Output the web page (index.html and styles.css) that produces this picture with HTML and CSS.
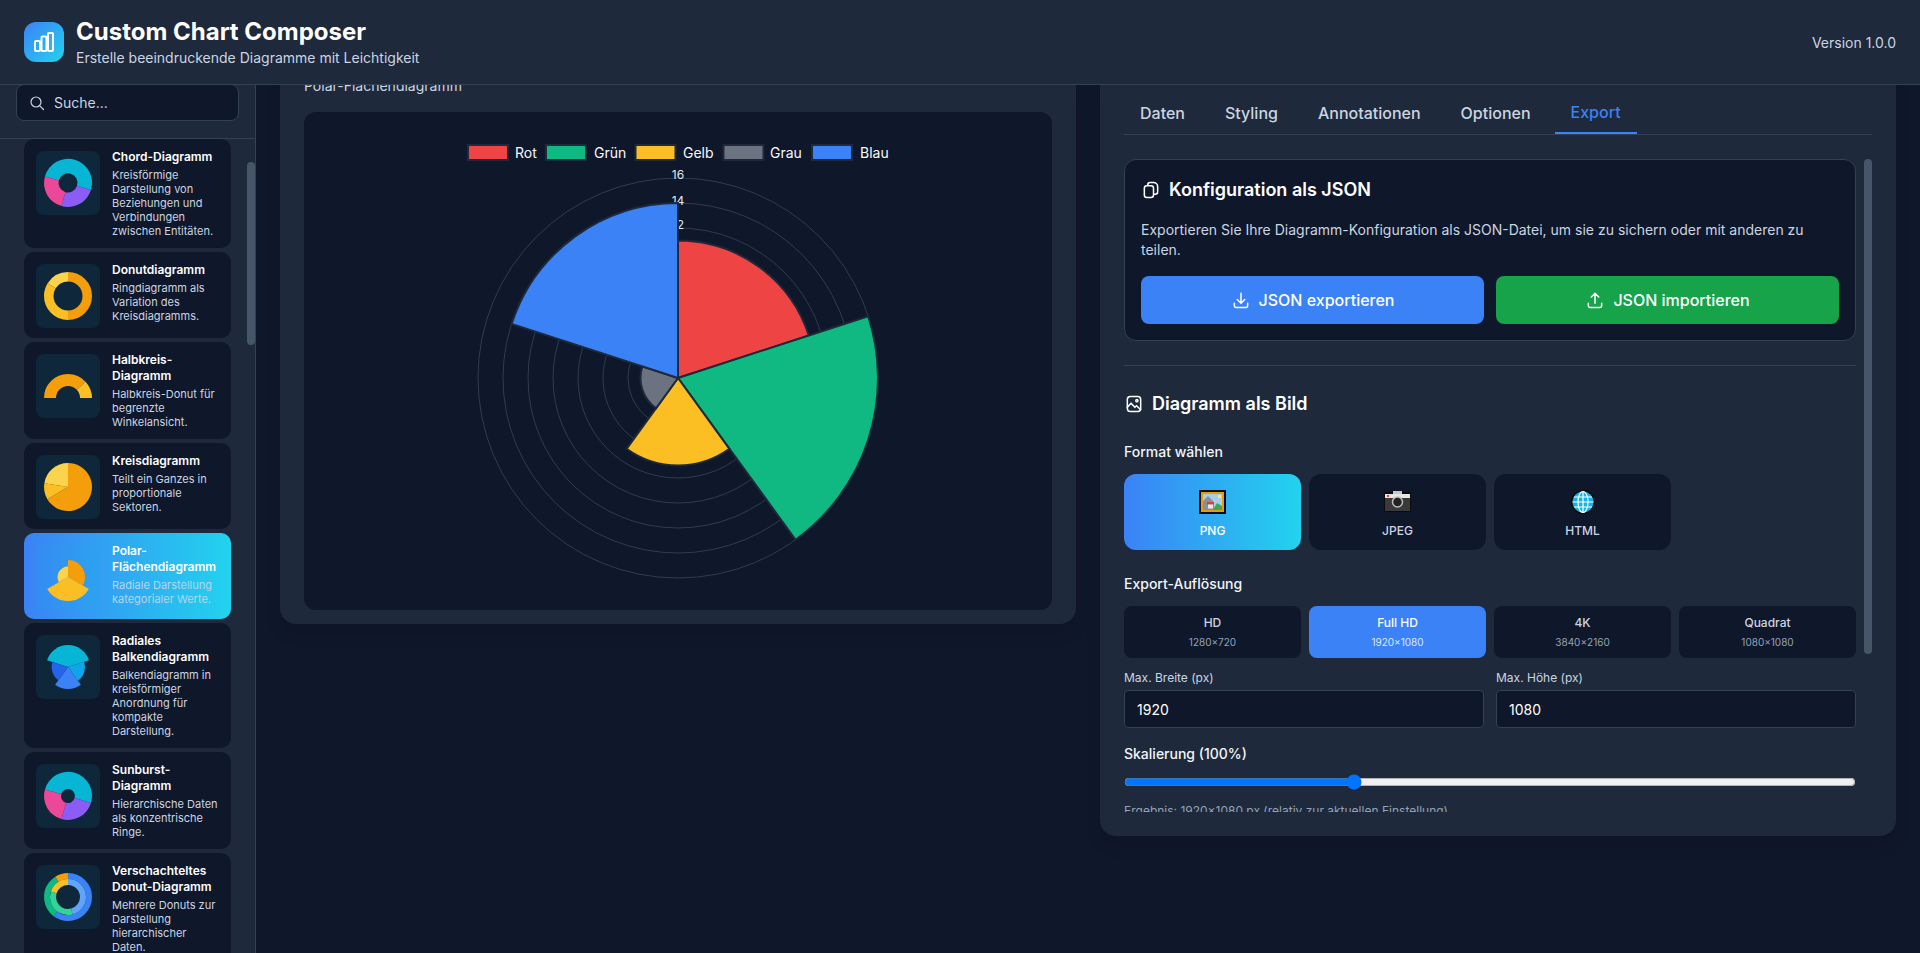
FILE: index.html
```html
<!DOCTYPE html>
<html lang="de">
<head>
<meta charset="utf-8">
<title>Custom Chart Composer</title>
<link rel="stylesheet" href="styles.css">
</head>
<body>
<header class="app-header">
  <div class="brand">
    <div class="logo">
      <svg width="24" height="24" viewBox="0 0 24 24" fill="none" stroke="#fff" stroke-width="2" stroke-linejoin="round"><rect x="3" y="11" width="5" height="10" rx="1"/><rect x="9.500" y="6.500" width="5" height="14.500" rx="1"/><rect x="16" y="3" width="5" height="18" rx="1"/></svg>
    </div>
    <div>
      <h1 class="app-title">Custom Chart Composer</h1>
      <p class="app-sub">Erstelle beeindruckende Diagramme mit Leichtigkeit</p>
    </div>
  </div>
  <div class="version">Version 1.0.0</div>
</header>

<div class="workspace">
  <aside class="sidebar">
    <div class="search-wrap">
      <label class="search">
        <svg width="16" height="16" viewBox="0 0 16 16" fill="none" stroke="#cbd5e1" stroke-width="1.2" stroke-linecap="round"><circle cx="7" cy="7" r="5"/><path d="M10.8 10.8 14.5 14.5"/></svg>
        <input class="search-input" type="text" placeholder="Suche...">
      </label>
    </div>
    <div class="chart-list">
      <div class="card">
        <div class="thumb"><svg width="64" height="64" viewBox="0 0 64 64"><path fill="#06b6d4" d="M8.93 25.38A24 24 0 1 1 54.95 39L41.08 34.77A9.5 9.5 0 1 0 22.87 29.38Z"/><path fill="#8b5cf6" d="M54.95 39A24 24 0 0 1 25.38 55.06L29.38 41.13A9.5 9.5 0 0 0 41.08 34.77Z"/><path fill="#ec4899" d="M25.38 55.06A24 24 0 0 1 8.93 25.38L22.87 29.38A9.5 9.5 0 0 0 29.38 41.13Z"/></svg></div>
        <div class="card-text"><div class="card-title">Chord-Diagramm</div><div class="card-desc">Kreisförmige Darstellung von Beziehungen und Verbindungen zwischen Entitäten.</div></div>
      </div>
      <div class="card">
        <div class="thumb"><svg width="64" height="64" viewBox="0 0 64 64" fill="none" stroke-width="9.5"><circle cx="32" cy="32" r="19.25" pathLength="360" stroke="#f59e0b" stroke-dasharray="180 360" transform="rotate(-90 32 32)"/><circle cx="32" cy="32" r="19.25" pathLength="360" stroke="#fbbf24" stroke-dasharray="122 360" transform="rotate(90 32 32)"/><circle cx="32" cy="32" r="19.25" pathLength="360" stroke="#fcd34d" stroke-dasharray="58 360" transform="rotate(212 32 32)"/></svg></div>
        <div class="card-text"><div class="card-title">Donutdiagramm</div><div class="card-desc">Ringdiagramm als Variation des Kreisdiagramms.</div></div>
      </div>
      <div class="card">
        <div class="thumb"><svg width="64" height="64" viewBox="0 0 64 64" fill="none" stroke-width="12"><circle cx="32" cy="44" r="18" pathLength="360" stroke="#f59e0b" stroke-dasharray="137 360" transform="rotate(180 32 44)"/><circle cx="32" cy="44" r="18" pathLength="360" stroke="#fbbf24" stroke-dasharray="43 360" transform="rotate(317 32 44)"/></svg></div>
        <div class="card-text"><div class="card-title">Halbkreis-Diagramm</div><div class="card-desc">Halbkreis-Donut für begrenzte Winkelansicht.</div></div>
      </div>
      <div class="card">
        <div class="thumb"><svg width="64" height="64" viewBox="0 0 64 64"><path fill="#f59e0b" d="M32 32V8A24 24 0 1 1 11.32 44.18Z"/><path fill="#fbbf24" d="M32 32 11.32 44.18A24 24 0 0 1 8.3 28.25Z"/><path fill="#fcd34d" d="M32 32 8.3 28.25A24 24 0 0 1 32 8Z"/></svg></div>
        <div class="card-text"><div class="card-title">Kreisdiagramm</div><div class="card-desc">Teilt ein Ganzes in proportionale Sektoren.</div></div>
      </div>
      <div class="card active">
        <div class="thumb"><svg width="64" height="64" viewBox="0 0 64 64"><path fill="#fcd34d" d="M32 32 22.91 37.25A10.5 10.5 0 0 1 32 21.5Z"/><path fill="#f59e0b" d="M32 32V15A17 17 0 0 1 46.72 40.5Z"/><path fill="#fbbf24" d="M32 32 52.78 44A24 24 0 0 1 11.22 44Z"/></svg></div>
        <div class="card-text"><div class="card-title">Polar-Flächendiagramm</div><div class="card-desc">Radiale Darstellung kategorialer Werte.</div></div>
      </div>
      <div class="card">
        <div class="thumb"><svg width="64" height="64" viewBox="0 0 64 64"><path fill="#06b6d4" d="M32 32 11.08 25.2A22 22 0 0 1 52.92 25.2Z"/><path fill="#0ea5e9" d="M32 32 48.17 26.75A17 17 0 0 1 41.99 45.75Z"/><path fill="#3b82f6" d="M32 32 44.93 49.8A22 22 0 0 1 19.07 49.8Z"/><path fill="#2563eb" d="M32 32 22.3 45.35A16.5 16.5 0 0 1 16.31 26.9Z"/></svg></div>
        <div class="card-text"><div class="card-title">Radiales Balkendiagramm</div><div class="card-desc">Balkendiagramm in kreisförmiger Anordnung für kompakte Darstellung.</div></div>
      </div>
      <div class="card">
        <div class="thumb"><svg width="64" height="64" viewBox="0 0 64 64"><path fill="#06b6d4" d="M8.93 25.38A24 24 0 1 1 54.95 39L38.69 34.05A7 7 0 1 0 25.27 30.07Z"/><path fill="#8b5cf6" d="M54.95 39A24 24 0 0 1 25.38 55.06L30.07 38.73A7 7 0 0 0 38.69 34.05Z"/><path fill="#ec4899" d="M25.38 55.06A24 24 0 0 1 8.93 25.38L25.27 30.07A7 7 0 0 0 30.07 38.73Z"/></svg></div>
        <div class="card-text"><div class="card-title">Sunburst-Diagramm</div><div class="card-desc">Hierarchische Daten als konzentrische Ringe.</div></div>
      </div>
      <div class="card">
        <div class="thumb"><svg width="64" height="64" viewBox="0 0 64 64" fill="none" stroke-width="6"><circle cx="32" cy="32" r="21" pathLength="360" stroke="#3b82f6" stroke-dasharray="217 360" transform="rotate(-90 32 32)"/><circle cx="32" cy="32" r="21" pathLength="360" stroke="#10b981" stroke-dasharray="111 360" transform="rotate(127 32 32)"/><circle cx="32" cy="32" r="21" pathLength="360" stroke="#f59e0b" stroke-dasharray="32 360" transform="rotate(238 32 32)"/><circle cx="32" cy="32" r="15" pathLength="360" stroke="#60a5fa" stroke-dasharray="165 360" transform="rotate(-90 32 32)"/><circle cx="32" cy="32" r="15" pathLength="360" stroke="#34d399" stroke-dasharray="123 360" transform="rotate(75 32 32)"/><circle cx="32" cy="32" r="15" pathLength="360" stroke="#fbbf24" stroke-dasharray="72 360" transform="rotate(198 32 32)"/></svg></div>
        <div class="card-text"><div class="card-title">Verschachteltes Donut-Diagramm</div><div class="card-desc">Mehrere Donuts zur Darstellung hierarchischer Daten.</div></div>
      </div>
    </div>
    <div class="side-thumb"></div>
  </aside>

  <main class="main">
    <div class="columns">
      <section class="panel preview">
        <p class="preview-name">Polar-Flächendiagramm</p>
        <div class="chart-box">
          <svg class="chart" width="748" height="498" viewBox="0 0 748 498">
            <g fill="none" stroke="#2f3c51" stroke-width="1">
              <circle cx="374" cy="266" r="25"/><circle cx="374" cy="266" r="50"/><circle cx="374" cy="266" r="75"/><circle cx="374" cy="266" r="100"/><circle cx="374" cy="266" r="125"/><circle cx="374" cy="266" r="150"/><circle cx="374" cy="266" r="175"/><circle cx="374" cy="266" r="200"/>
            </g>
            <g class="tick">
              <text x="374" y="64">16</text><text x="374" y="90">14</text><text x="374" y="114">12</text>
            </g>
            <g stroke="#1e293b" stroke-width="2" stroke-linejoin="miter">
              <path fill="#ef4444" d="M374 266V128.5A137.5 137.5 0 0 1 504.8 223.5Z"/>
              <path fill="#10b981" d="M374 266 564.2 204.2A200 200 0 0 1 491.6 427.8Z"/>
              <path fill="#fbbf24" d="M374 266 425.4 336.8A87.5 87.5 0 0 1 322.6 336.8Z"/>
              <path fill="#6b7280" d="M374 266 352 296.3A37.5 37.5 0 0 1 338.3 254.4Z"/>
              <path fill="#3b82f6" d="M374 266 207.6 211.9A175 175 0 0 1 374 91Z"/>
            </g>
            <g stroke="#1e293b" stroke-width="2">
              <rect x="164" y="33" width="40" height="15" fill="#ef4444"/>
              <rect x="242" y="33" width="40" height="15" fill="#10b981"/>
              <rect x="331.500" y="33" width="40" height="15" fill="#fbbf24"/>
              <rect x="419.500" y="33" width="40" height="15" fill="#6b7280"/>
              <rect x="508" y="33" width="40" height="15" fill="#3b82f6"/>
            </g>
            <g class="legend-label">
              <text x="211" y="45.500">Rot</text><text x="290" y="45.500">Grün</text><text x="379" y="45.500">Gelb</text><text x="466" y="45.500">Grau</text><text x="556" y="45.500">Blau</text>
            </g>
          </svg>
        </div>
      </section>

      <section class="panel editor">
        <nav class="tabs">
          <span class="tab">Daten</span><span class="tab">Styling</span><span class="tab">Annotationen</span><span class="tab">Optionen</span><span class="tab current">Export</span>
        </nav>
        <div class="editor-scroll">
          <div class="json-card">
            <h3 class="sec-title">
              <svg width="20" height="20" viewBox="0 0 24 24" fill="none" stroke="#fff" stroke-width="1.8" stroke-linejoin="round"><path d="M8 7V6a3 3 0 0 1 3-3h4a5 5 0 0 1 5 5v6a3 3 0 0 1-3 3h-2"/><rect x="4" y="7" width="11" height="14" rx="3"/></svg>
              Konfiguration als JSON
            </h3>
            <p class="json-text">Exportieren Sie Ihre Diagramm-Konfiguration als JSON-Datei, um sie zu sichern oder mit anderen zu teilen.</p>
            <div class="two-col wide">
              <button class="btn btn-blue" type="button">
                <svg width="20" height="20" viewBox="0 0 24 24" fill="none" stroke="#fff" stroke-width="1.8" stroke-linecap="round" stroke-linejoin="round"><path d="M4 16v3a2 2 0 0 0 2 2h12a2 2 0 0 0 2-2v-3M12 4v12M7.500 11.500 12 16l4.500-4.500"/></svg>
                JSON exportieren
              </button>
              <button class="btn btn-green" type="button">
                <svg width="20" height="20" viewBox="0 0 24 24" fill="none" stroke="#fff" stroke-width="1.8" stroke-linecap="round" stroke-linejoin="round"><path d="M4 16v3a2 2 0 0 0 2 2h12a2 2 0 0 0 2-2v-3M12 16V4M7.500 8.500 12 4l4.500 4.500"/></svg>
                JSON importieren
              </button>
            </div>
          </div>

          <div class="image-section">
            <h3 class="sec-title">
              <svg width="20" height="20" viewBox="0 0 24 24" fill="none" stroke="#fff" stroke-width="1.8" stroke-linecap="round" stroke-linejoin="round"><rect x="4" y="3" width="16" height="18" rx="3.500"/><path d="M4 16l4.500-5 4.500 5 2-2 5 5"/><circle cx="15.500" cy="8" r="1.300"/></svg>
              Diagramm als Bild
            </h3>
            <div class="field-label format-label">Format wählen</div>
            <div class="four-col">
              <div class="format selected">
                <svg width="27" height="24" viewBox="0 0 27 24"><rect width="27" height="24" fill="#0b0b0b"/><rect x="2" y="2" width="23" height="20" fill="#e89b10"/><rect x="4" y="4" width="19" height="16" fill="#a9cfe8"/><rect x="19" y="5" width="3" height="3" fill="#ffe680"/><path fill="#84909c" d="M4 20V11l5-5 5 5 2 9Z"/><path fill="#3fa84a" d="M14 20l4-7 5 3v4Z"/><rect x="8" y="12" width="7" height="2.500" fill="#d8403a"/><rect x="9" y="14.500" width="5" height="4" fill="#efe6dc"/></svg>
                <span>PNG</span>
              </div>
              <div class="format">
                <svg width="27" height="24" viewBox="0 0 27 24"><rect y="2" width="27" height="20" rx="2" fill="#0b0b0b"/><rect x="9" y="1" width="9" height="3" fill="#c8c8c8"/><rect x="1" y="4" width="25" height="4" fill="#e6e6e6"/><rect x="1" y="8" width="25" height="13" fill="#3a3a3a"/><rect x="3" y="5" width="2" height="2" fill="#e04040"/><circle cx="13.500" cy="12" r="5" fill="#222" stroke="#bdbdbd" stroke-width="1.500"/></svg>
                <span>JPEG</span>
              </div>
              <div class="format">
                <svg width="24" height="24" viewBox="0 0 24 24"><circle cx="12" cy="12" r="12" fill="#0b0b0b"/><circle cx="12" cy="12" r="10.500" fill="#12b5ea"/><g fill="none" stroke="#fff" stroke-width="1.200"><ellipse cx="12" cy="12" rx="5" ry="10.500"/><path d="M12 1.500v21M1.500 12h21M3 7h18M3 17h18"/></g></svg>
                <span>HTML</span>
              </div>
            </div>
            <div class="field-label res-label">Export-Auflösung</div>
            <div class="four-col">
              <div class="preset"><span class="preset-name">HD</span><span class="preset-size">1280×720</span></div>
              <div class="preset selected-blue"><span class="preset-name">Full HD</span><span class="preset-size">1920×1080</span></div>
              <div class="preset"><span class="preset-name">4K</span><span class="preset-size">3840×2160</span></div>
              <div class="preset"><span class="preset-name">Quadrat</span><span class="preset-size">1080×1080</span></div>
            </div>
            <div class="two-col sizes">
              <label class="size-field"><span class="size-label">Max. Breite (px)</span><input class="size-input" type="text" value="1920"></label>
              <label class="size-field"><span class="size-label">Max. Höhe (px)</span><input class="size-input" type="text" value="1080"></label>
            </div>
            <div class="field-label scale-label">Skalierung (100%)</div>
            <input class="range" type="range" min="10" max="300" value="100">
            <p class="result">Ergebnis: 1920×1080 px (relativ zur aktuellen Einstellung)</p>
          </div>
        </div>
        <div class="editor-thumb"></div>
      </section>
    </div>
  </main>
</div>
</body>
</html>
```

FILE: styles.css
```css
* { box-sizing: border-box; }
html, body { height: 100%; }
body {
  margin: 0;
  display: flex;
  flex-direction: column;
  overflow: hidden;
  background: #0f172a;
  color: #fff;
  font-family: Inter, "Liberation Sans", sans-serif;
}
h1, h3, p { margin: 0; }

.app-header {
  flex: none;
  height: 85px;
  display: flex;
  align-items: center;
  justify-content: space-between;
  padding: 0 24px;
  background: #1e293b;
  border-bottom: 1px solid #334155;
  position: relative;
  z-index: 2;
}
.brand { display: flex; align-items: center; gap: 12px; }
.logo {
  width: 40px;
  height: 40px;
  border-radius: 12px;
  background: linear-gradient(135deg, #3b82f6, #22d3ee);
  display: flex;
  align-items: center;
  justify-content: center;
}
.app-title { font-size: 24px; line-height: 32px; font-weight: 700; }
.app-sub { font-size: 14px; line-height: 20px; color: #cbd5e1; }
.version { font-size: 14px; color: #cbd5e1; }

.workspace { flex: 1; min-height: 0; display: flex; }

.sidebar {
  flex: none;
  width: 256px;
  display: flex;
  flex-direction: column;
  background: #1e293b;
  border-right: 1px solid #334155;
  position: relative;
}
.search-wrap { flex: none; margin-top: -1px; padding: 0 16px 17px; border-bottom: 1px solid #334155; }
.search {
  height: 37px;
  display: flex;
  align-items: center;
  gap: 7px;
  padding: 0 12px;
  background: #0f172a;
  border: 1px solid #334155;
  border-radius: 8px;
}
.search-input {
  flex: 1;
  min-width: 0;
  background: none;
  border: 0;
  outline: 0;
  color: #fff;
  font: 14px Inter, sans-serif;
}
.search-input::placeholder { color: #cbd5e1; opacity: 1; }
.chart-list {
  flex: 1;
  min-height: 0;
  overflow: hidden;
  display: flex;
  flex-direction: column;
  gap: 4px;
  padding: 0 24px;
}
.card {
  flex: none;
  display: flex;
  gap: 12px;
  padding: 10px 12px;
  background: #0f172a;
  border-radius: 10px;
}
.card.active { background: linear-gradient(90deg, #3b82f6, #22d3ee); }
.thumb {
  flex: none;
  width: 64px;
  height: 64px;
  margin-top: 2px;
  border-radius: 8px;
  background: rgba(6, 182, 212, 0.1);
}
.thumb svg { display: block; }
.card-text { min-width: 0; flex: 1; }
.card-title { font-size: 12px; line-height: 16px; font-weight: 600; }
.card-desc { margin-top: 3px; font-size: 11px; line-height: 14px; color: #cbd5e1; }
.card.active .card-desc { color: #b8d4ea; }
.side-thumb {
  position: absolute;
  left: 247px;
  top: 77px;
  width: 8px;
  height: 183px;
  border-radius: 4px;
  background: #475569;
}

.main { flex: 1; min-width: 0; overflow: hidden; padding: 0 24px; }
.columns {
  display: grid;
  grid-template-columns: 1fr 1fr;
  gap: 24px;
  align-items: start;
  margin-top: -16px;
}
.panel {
  background: #1e293b;
  border-radius: 16px;
  box-shadow: 0 10px 15px rgba(0, 0, 0, 0.1);
}
.preview { padding: 7px 24px 14px; }
.preview-name { font-size: 14px; line-height: 20px; color: #cbd5e1; margin-bottom: 16px; }
.chart-box { height: 498px; background: #0f172a; border-radius: 12px; }
.chart { display: block; }
.tick text { font-size: 12px; fill: #e2e8f0; text-anchor: middle; dominant-baseline: middle; }
.legend-label text { font-size: 14px; fill: #f8fafc; }

.editor { position: relative; padding: 21px 24px 24px; }
.tabs { display: flex; gap: 8px; border-bottom: 1px solid #334155; }
.tab {
  padding: 13px 16px 11px;
  font-size: 16px;
  line-height: 20px;
  font-weight: 500;
  color: #cbd5e1;
}
.tab.current { padding: 12px 16px 10px; color: #3b82f6; border-bottom: 2px solid #3b82f6; }
.editor-scroll { height: 653px; margin-top: 24px; overflow: hidden; padding-right: 16px; }
.editor-thumb {
  position: absolute;
  left: 764px;
  top: 90px;
  width: 8px;
  height: 495px;
  border-radius: 4px;
  background: #475569;
}

.json-card {
  background: #0f172a;
  border: 1px solid #334155;
  border-radius: 12px;
  padding: 16px;
}
.sec-title {
  display: flex;
  align-items: center;
  gap: 8px;
  font-size: 18px;
  line-height: 28px;
  font-weight: 600;
}
.json-text { margin-top: 16px; font-size: 14px; line-height: 20px; color: #cbd5e1; }
.two-col { display: grid; grid-template-columns: 1fr 1fr; gap: 12px; }
.two-col.wide { margin-top: 16px; }
.btn {
  height: 48px;
  display: flex;
  align-items: center;
  justify-content: center;
  gap: 8px;
  border: 0;
  border-radius: 8px;
  color: #fff;
  font: 500 16px Inter, sans-serif;
}
.btn-blue { background: #3b82f6; }
.btn-green { background: #16a34a; }

.image-section { margin-top: 24px; padding-top: 24px; border-top: 1px solid #334155; }
.field-label { font-size: 14px; line-height: 20px; font-weight: 500; color: #f1f5f9; }
.format-label { margin-top: 24px; margin-bottom: 12px; }
.res-label { margin-top: 24px; margin-bottom: 12px; }
.four-col { display: grid; grid-template-columns: repeat(4, 1fr); gap: 8px; }
.format {
  height: 76px;
  display: flex;
  flex-direction: column;
  align-items: center;
  gap: 9px;
  padding-top: 16px;
  background: #0f172a;
  border-radius: 12px;
  font-size: 12px;
  line-height: 16px;
  font-weight: 500;
  color: #cbd5e1;
}
.format svg { display: block; flex: none; }
.format.selected { background: linear-gradient(90deg, #3b82f6, #22d3ee); color: #fff; }
.preset {
  height: 52px;
  display: flex;
  flex-direction: column;
  align-items: center;
  justify-content: center;
  gap: 4px;
  background: #0f172a;
  border-radius: 8px;
}
.preset-name { font-size: 12px; line-height: 16px; font-weight: 500; color: #cbd5e1; }
.preset-size { font-size: 10px; line-height: 14px; color: #94a3b8; }
.preset.selected-blue { background: #3b82f6; }
.selected-blue .preset-name { color: #fff; }
.selected-blue .preset-size { color: #dbeafe; }
.sizes { margin-top: 12px; }
.size-field { display: block; }
.size-label { display: block; margin-bottom: 4px; font-size: 12px; line-height: 16px; color: #cbd5e1; }
.size-input {
  display: block;
  width: 100%;
  height: 38px;
  padding: 0 12px;
  background: #0f172a;
  border: 1px solid #334155;
  border-radius: 4px;
  outline: 0;
  color: #fff;
  font: 14px Inter, sans-serif;
}
.scale-label { margin-top: 16px; margin-bottom: 10px; }
.range { display: block; width: 100%; height: 16px; margin: 0; }
.result { margin-top: 13px; font-size: 12px; line-height: 16px; color: #94a3b8; }
```
